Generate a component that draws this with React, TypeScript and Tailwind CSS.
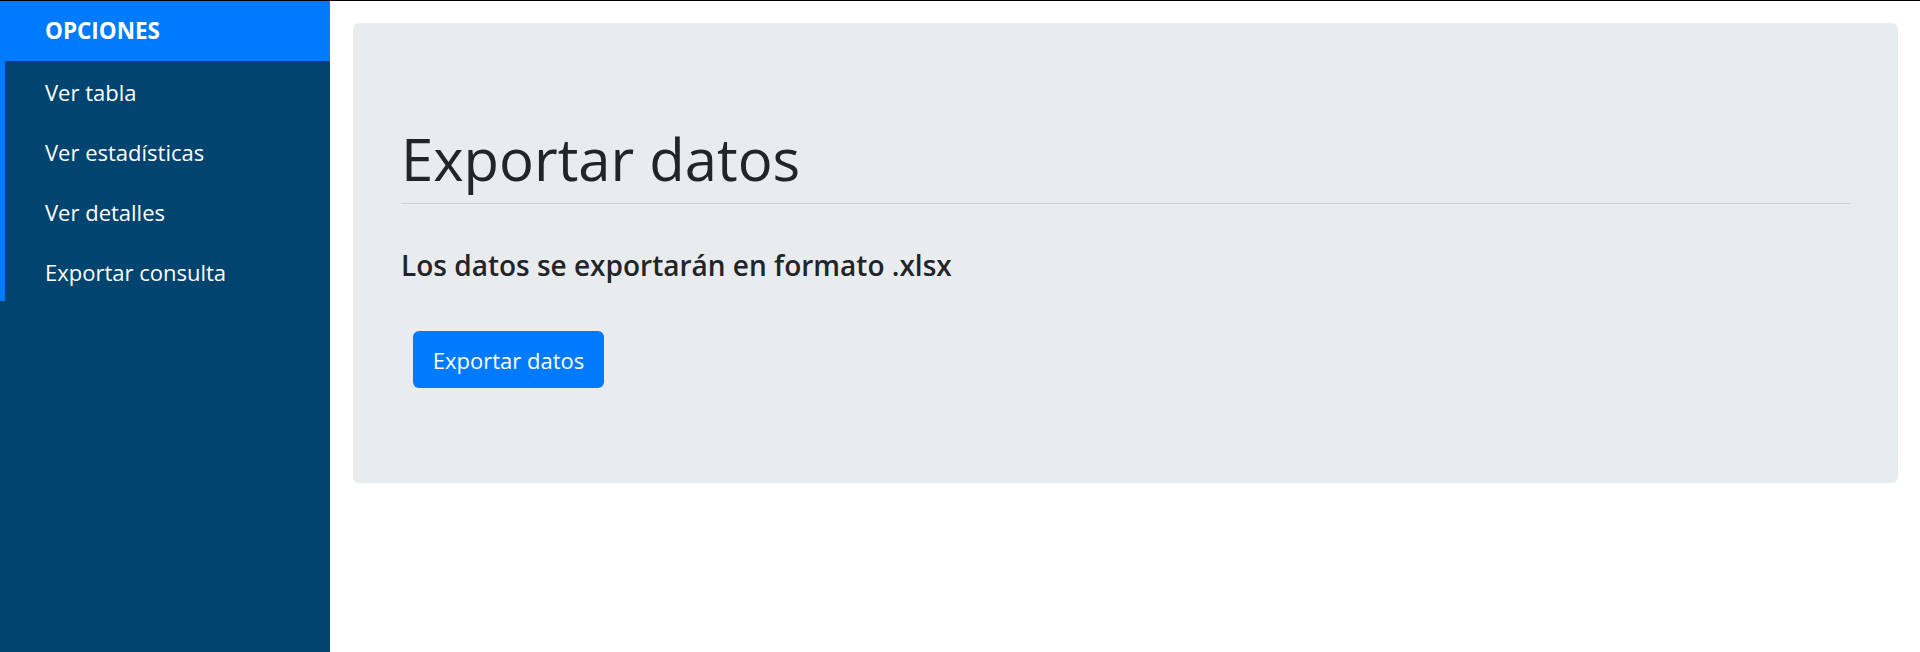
import React from "react";

const items = ["Ver tabla", "Ver estadísticas", "Ver detalles", "Exportar consulta"];

export default function App() {
  return (
    <div
      className="flex h-[652px] w-full border-t border-black bg-white text-[#212529]"
      style={{ fontFamily: '"Open Sans", "Noto Sans", sans-serif' }}
    >
      <aside className="flex w-[330px] shrink-0 flex-col bg-[#00446f]">
        <div className="h-[60px] bg-[#007bff] pl-[45px] pt-[15px] text-[22.5px] font-bold leading-[30px] text-white">
          OPCIONES
        </div>
        <ul className="border-l-[5px] border-[#007bff]">
          {items.map((it) => (
            <li key={it} className="h-[60px] pl-[40px] pt-[16px] text-[22px] leading-[30px] text-white">
              {it}
            </li>
          ))}
        </ul>
      </aside>
      <main className="flex-1 pl-[23px] pr-[22px] pt-[22px]">
        <div className="h-[460px] rounded-[6px] bg-[#e9ecef] px-[48px] pt-[101px]">
          <h1 className="text-[58px] font-normal leading-[70px] text-[#212529]">Exportar datos</h1>
          <div className="mt-[9px] h-px bg-[#cfd2d5]" />
          <p className="mt-[44px] text-[28px] font-semibold leading-[35px] text-[#212529]">
            Los datos se exportarán en formato .xlsx
          </p>
          <button
            type="button"
            className="ml-[12px] mt-[48px] flex h-[57px] w-[191px] items-center justify-center rounded-[6px] bg-[#007bff] text-[22px] leading-[36px] text-white"
          >
            Exportar datos
          </button>
        </div>
      </main>
    </div>
  );
}
